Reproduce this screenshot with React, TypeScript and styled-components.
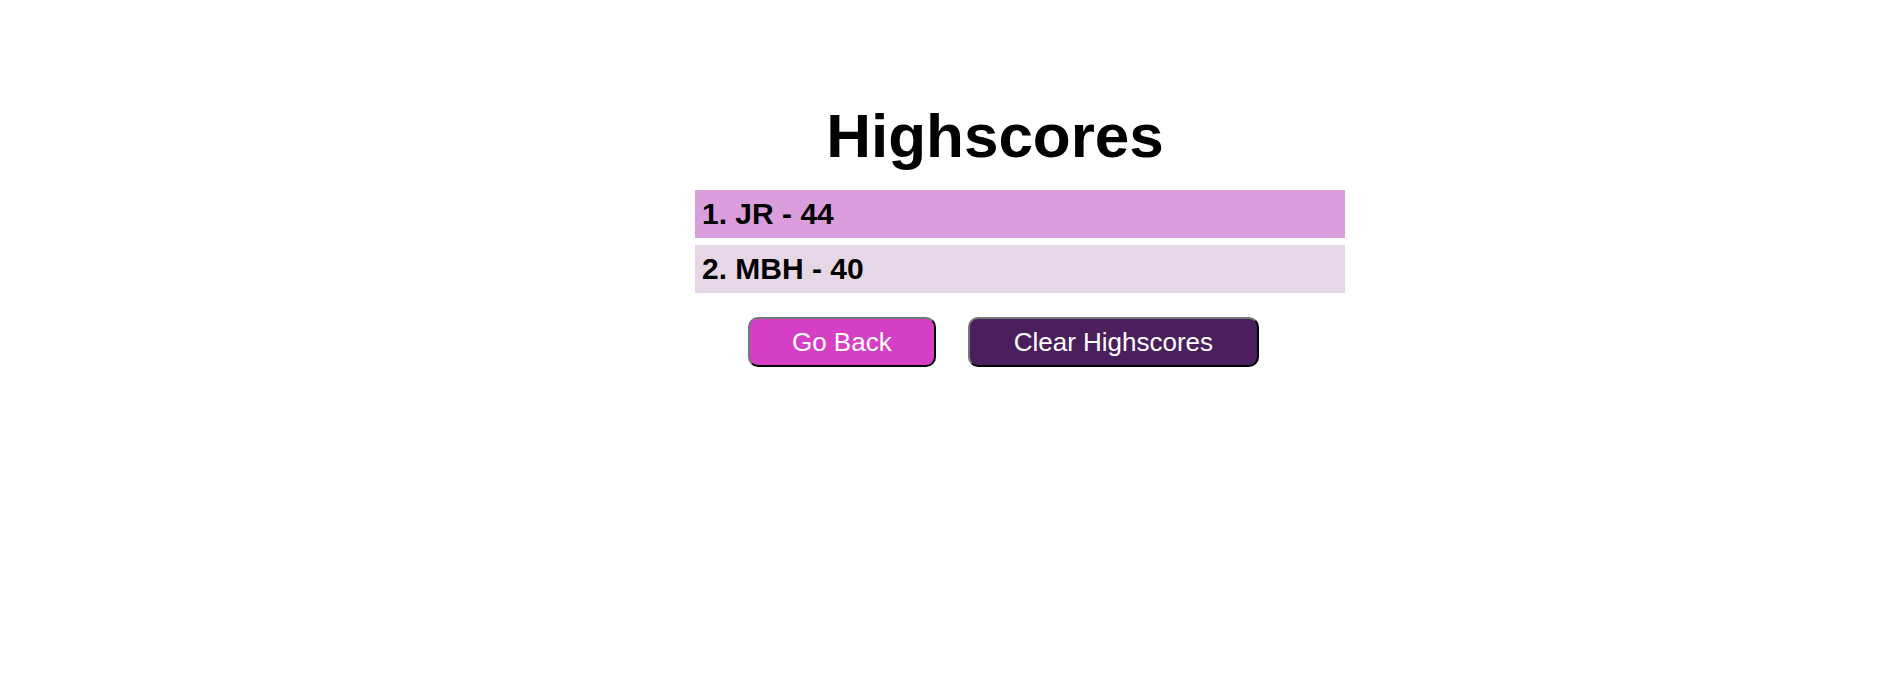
import styled, { createGlobalStyle } from 'styled-components';

const GlobalStyle = createGlobalStyle`
  html, body {
    margin: 0;
    padding: 0;
    background: #ffffff;
    font-family: "Liberation Sans", Arial, sans-serif;
  }
`

interface Score {
  initials: string,
  score: number,
}

const scores: Score[] = [
  { initials: 'JR', score: 44 },
  { initials: 'MBH', score: 40 },
]

export default function App() {
  return (
    <>
      <GlobalStyle />
      <Page>
        <Title>Highscores</Title>

        <ScoreList>
          {scores.map((item, i) => (
            <ScoreRow key={item.initials} $odd={i % 2 === 0}>
              {i + 1}. {item.initials} - {item.score}
            </ScoreRow>
          ))}
        </ScoreList>

        <Actions>
          <ActionBtn $variant="back">Go Back</ActionBtn>
          <ActionBtn $variant="clear">Clear Highscores</ActionBtn>
        </Actions>
      </Page>
    </>
  )
}

const Page = styled.main`
  display: flex;
  flex-direction: column;
  width: 650px;
  margin-left: 695px;
  padding-top: 100px;
`

const Title = styled.h1`
  margin: 0 50px 19px 0;
  font-size: 62px;
  font-weight: bold;
  text-align: center;
  color: #000000;
`

const ScoreList = styled.ol`
  display: flex;
  flex-direction: column;
  gap: 7px;
  margin: 0;
  padding: 0;
  list-style: none;
`

const ScoreRow = styled.li<{
  $odd?: boolean;
}>`
  padding: 7px 7px;
  font-size: 30px;
  line-height: 34px;
  font-weight: bold;
  color: #000000;
  background-color: ${({ $odd }) => ($odd ? '#d99edb' : '#e5d7e6')};
`

const Actions = styled.div`
  display: flex;
  justify-content: center;
  gap: 32px;
  margin: 24px 33px 0 0;
`

const ActionBtn = styled.button<{
  $variant: 'back' | 'clear';
}>`
  height: 50px;
  padding: 0 ${({ $variant }) => ($variant === 'back' ? '42px' : '44px')};
  font-family: "Liberation Sans", Arial, sans-serif;
  font-size: 26px;
  line-height: 30px;
  color: #ffffff;
  background-color: ${({ $variant }) => ($variant === 'back' ? '#d53fc6' : '#4b1f5e')};
  border: 2px outset;
  border-color: #767676 #222222 #222222 #767676;
  border-radius: 10px;
  cursor: pointer;
`
